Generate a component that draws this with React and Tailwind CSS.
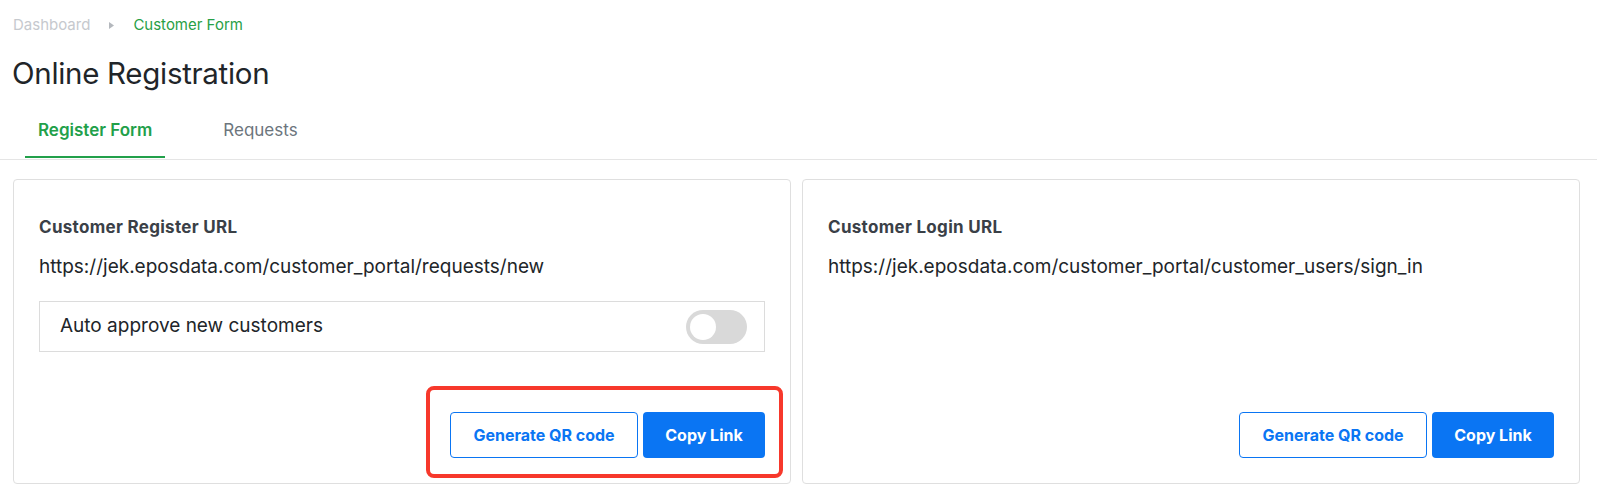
import React, { useState } from "react";

function UrlCard({ title, url, children, highlight }) {
  return (
    <div className="h-[305px] border border-[#dfdfdf] rounded-[4px] bg-white flex flex-col pt-[35px] px-[25px] pb-[25px]">
      <h3 className="text-[17px] leading-6 font-bold tracking-[0.3px] text-[#3a4047]">{title}</h3>
      <p className="mt-[14px] text-[19px] leading-[28px] text-[#212529]">{url}</p>
      {children}

      {/* Buttons */}
      <div className="mt-auto flex justify-end">
        <div className="relative flex gap-[5px]">
          {highlight && (
            <div className="absolute -left-6 -top-[26px] -right-[18px] -bottom-5 border-4 border-[#f7382b] rounded-[8px] pointer-events-none" />
          )}
          <button className="h-[46px] w-[188px] rounded-[4px] border border-[#0a75f3] bg-white text-[#0a75f3] text-[16px] font-bold">
            Generate QR code
          </button>
          <button className="h-[46px] w-[122px] rounded-[4px] bg-[#0a75f3] text-white text-[16px] font-bold">
            Copy Link
          </button>
        </div>
      </div>
    </div>
  );
}

export default function App() {
  const [autoApprove, setAutoApprove] = useState(false);
  const [tab, setTab] = useState("form");

  const tabClass = (active) =>
    `px-[13px] pt-[14px] pb-[14px] mb-px border-b-2 text-[17px] leading-6 ${active
      ? "border-[#22a04a] text-[#22a04a] font-semibold"
      : "border-transparent text-[#6c757d]"
    }`;

  return (
    <div className="min-h-screen bg-white font-['Inter',sans-serif]">
      {/* Breadcrumb */}
      <div className="pl-[13px] pt-[14px] flex items-center text-[15px] leading-[22px]">
        <span className="text-[#c6c9ce]">Dashboard</span>
        <svg className="ml-[19px] mr-[19px] w-[5px] h-[7px]" viewBox="0 0 5 7">
          <path d="M0 0L5 3.5L0 7Z" fill="#b4b8bd" />
        </svg>
        <span className="text-[#28a046]">Customer Form</span>
      </div>

      {/* Title */}
      <h1 className="pl-[12px] mt-[19px] text-[29.5px] leading-9 text-[#212529] tracking-[-0.3px]">
        Online Registration
      </h1>

      {/* Tabs */}
      <nav className="mt-[13px] border-b border-[#e5e5e5] pl-[25px] flex gap-[45px]">
        <button className={tabClass(tab === "form")} onClick={() => setTab("form")}>
          Register Form
        </button>
        <button className={tabClass(tab === "requests")} onClick={() => setTab("requests")}>
          Requests
        </button>
      </nav>

      {/* Cards */}
      <div className="mt-[19px] pl-[13px] pr-[17px] grid grid-cols-2 gap-[11px]">
        <UrlCard
          title="Customer Register URL"
          url="https://jek.eposdata.com/customer_portal/requests/new"
          highlight
        >
          <div className="mt-[20px] h-[51px] border border-[#dcdcdc] flex items-center justify-between pl-[20px] pr-[17px]">
            <span className="text-[19px] text-[#212529]">Auto approve new customers</span>
            <button
              onClick={() => setAutoApprove((v) => !v)}
              className={`w-[61px] h-[34px] rounded-full p-[4px] flex ${autoApprove ? "bg-[#0a75f3] justify-end" : "bg-[#d9d9d9] justify-start"}`}
              aria-label="Auto approve"
            >
              <span className="block w-[26px] h-[26px] rounded-full bg-white" />
            </button>
          </div>
        </UrlCard>
        <UrlCard
          title="Customer Login URL"
          url="https://jek.eposdata.com/customer_portal/customer_users/sign_in"
        />
      </div>
    </div>
  );
}
